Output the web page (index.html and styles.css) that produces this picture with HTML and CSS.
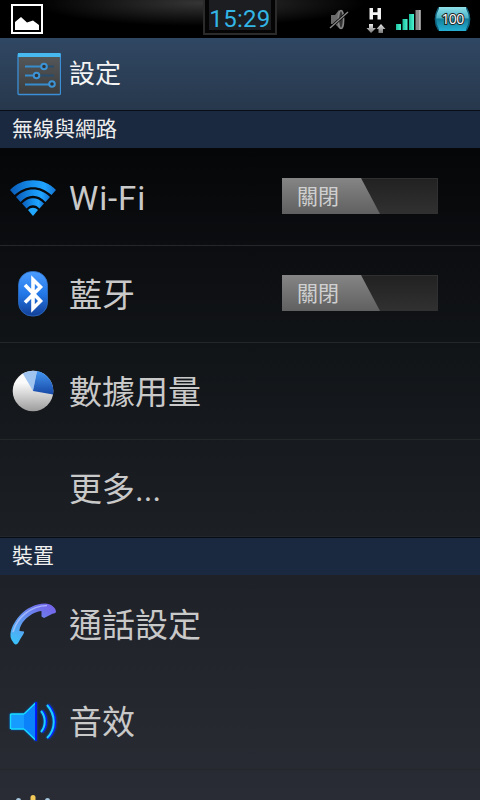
FILE: index.html
```html
<!DOCTYPE html>
<html lang="zh-Hant">
<head>
    <meta charset="UTF-8">
    <meta name="viewport" content="width=device-width, initial-scale=1.0">
    <title>設定</title>
    <link rel="stylesheet" href="styles.css">
</head>
<body>
    <div class="status-bar">
        <svg class="status-picture" width="32" height="30" viewBox="0 0 32 30">
            <rect x="1" y="1" width="30" height="28" fill="#000" stroke="#fff" stroke-width="2"/>
            <path d="M4 26V18L10 13L16 18.500L22 16.500L28 21V26Z" fill="#fff"/>
        </svg>
        <div class="clock"><span>15:29</span></div>
        <div class="status-icons">
            <svg width="152" height="38" viewBox="328 0 152 38">
                <defs>
                    <linearGradient id="bars" x1="0" y1="0" x2="1" y2="0">
                        <stop offset="0" stop-color="#1cbf9c"/>
                        <stop offset="1" stop-color="#4cf5d2"/>
                    </linearGradient>
                    <linearGradient id="battery" x1="0" y1="0" x2="0" y2="1">
                        <stop offset="0" stop-color="#8fe0ea"/>
                        <stop offset=".45" stop-color="#4bb4c6"/>
                        <stop offset=".5" stop-color="#147f9b"/>
                        <stop offset="1" stop-color="#26b0d3"/>
                    </linearGradient>
                    <linearGradient id="arrows" x1="0" y1="0" x2="0" y2="1">
                        <stop offset="0" stop-color="#e8e8e8"/>
                        <stop offset="1" stop-color="#777"/>
                    </linearGradient>
                </defs>
                <!-- muted speaker -->
                <path d="M331 15H335L339 10V28L335 24H331Z" fill="#6a6a6a"/>
                <ellipse cx="341" cy="19.5" rx="2.6" ry="9" fill="#333" stroke="#858585" stroke-width="1.6"/>
                <path d="M330 28L348 12" stroke="#000" stroke-width="3"/>
                <path d="M330 28L348 12" stroke="#8a8a8a" stroke-width="1.4"/>
                <!-- mobile data -->
                <path d="M369.500 8H373V12.300H377.500V8H381V19.500H377.500V15H373V19.500H369.500Z" fill="#f2f2f2"/>
                <path d="M369 24H373V28H376L371 33L366.500 28H369Z" fill="url(#arrows)"/>
                <path d="M378.500 33H383V29H385.500L381 24L376.500 29H378.500Z" fill="url(#arrows)"/>
                <!-- signal -->
                <rect x="396" y="24" width="5" height="6" fill="url(#bars)"/>
                <rect x="402.500" y="19" width="5" height="11" fill="url(#bars)"/>
                <rect x="409" y="14" width="5" height="16" fill="url(#bars)"/>
                <rect x="415.500" y="10" width="5" height="20" fill="#8b8b8b"/>
                <path d="M420 10V30" stroke="#d6d6d6"/>
                <!-- battery -->
                <path d="M439 7H466C471 14 471 24 466 31H439C434 24 434 14 439 7Z" fill="url(#battery)"/>
                <path d="M438.500 8C434.500 15 434.500 23 438.500 30M466.500 8C470.500 15 470.500 23 466.500 30" fill="none" stroke="#0d5e7a" stroke-width="1.5"/>
                <text class="battery-text" x="452.500" y="24" text-anchor="middle">100</text>
            </svg>
        </div>
    </div>

    <div class="action-bar">
        <svg width="44" height="43" viewBox="0 0 44 43">
            <defs>
                <linearGradient id="panel" x1="0" y1="0" x2="0" y2="1">
                    <stop offset="0" stop-color="#56585a"/>
                    <stop offset="1" stop-color="#3a3c3d"/>
                </linearGradient>
            </defs>
            <rect x="1" y="1" width="42.500" height="40.500" rx="1" fill="url(#panel)" stroke="#3a8fd6" stroke-width="1.300"/>
            <path d="M1 0H43.500V4H1Z" fill="#48b9ef"/>
            <path d="M8 13.500H24M8 22.500H16M8 31.500H32" stroke="#378ccd" stroke-width="1.900"/>
            <path d="M30 13.500H37M22 22.500H37" stroke="#294d6c" stroke-width="1.900"/>
            <g fill="#303234" stroke="#3c93d5" stroke-width="2">
                <circle cx="27" cy="13.500" r="2.800"/>
                <circle cx="19.500" cy="22.500" r="2.800"/>
                <circle cx="35" cy="31" r="2.800"/>
            </g>
        </svg>
        <h1>設定</h1>
    </div>

    <div class="section-title">無線與網路</div>
    <ul class="list">
        <li>
            <div class="icon">
                <svg width="48" height="48" viewBox="0 0 48 48">
                    <defs>
                        <linearGradient id="wifi" x1="0" y1="0" x2="1" y2="0">
                            <stop offset="0" stop-color="#0b5bb8"/>
                            <stop offset=".5" stop-color="#1692f0"/>
                            <stop offset=".75" stop-color="#20a4ff"/>
                            <stop offset="1" stop-color="#1472cf"/>
                        </linearGradient>
                    </defs>
                    <g fill="url(#wifi)">
                        <path d="M1 17C13 4 35 4 47 17L42.500 22C31 11.500 17 11.500 5.500 22Z"/>
                        <path d="M7 24C17 14 31 14 41 24L36.500 29C29 20.500 19 20.500 11.500 29Z"/>
                        <path d="M13 30.500C20 23.500 28 23.500 35 30.500L30.500 35.500C27 31 21 31 17.500 35.500Z"/>
                        <path d="M19 37C22 34 26 34 29 37L24 43Z" fill="#22a8ff"/>
                    </g>
                </svg>
            </div>
            <span class="label latin">Wi-Fi</span>
            <div class="switch"><span>關閉</span></div>
        </li>
        <li>
            <div class="icon">
                <svg width="48" height="48" viewBox="0 0 48 48">
                    <defs>
                        <linearGradient id="bt" x1="0" y1="0" x2="0" y2="1">
                            <stop offset="0" stop-color="#4c9cff"/>
                            <stop offset=".5" stop-color="#2378e8"/>
                            <stop offset="1" stop-color="#123f97"/>
                        </linearGradient>
                    </defs>
                    <rect x="9.500" y="1.500" width="29" height="44.500" rx="13.500" fill="url(#bt)" stroke="#2e6ec4" stroke-width=".8"/>
                    <path d="M16 15L31.500 31L24 38.500V9.500L31.500 17L16 32.500" fill="none" stroke="#fff" stroke-width="3.600"/>
                </svg>
            </div>
            <span class="label">藍牙</span>
            <div class="switch"><span>關閉</span></div>
        </li>
        <li>
            <div class="icon">
                <svg width="48" height="48" viewBox="0 0 48 48">
                    <defs>
                        <linearGradient id="pie" x1="0" y1="0" x2="0" y2="1">
                            <stop offset=".3" stop-color="#fafafa"/>
                            <stop offset="1" stop-color="#9c9c9c"/>
                        </linearGradient>
                        <linearGradient id="slice" x1="0" y1="0" x2="0" y2="1">
                            <stop offset="0" stop-color="#4296f0"/>
                            <stop offset="1" stop-color="#1748a6"/>
                        </linearGradient>
                    </defs>
                    <circle cx="24" cy="24" r="20.300" fill="url(#pie)"/>
                    <path d="M24 24L13.800 6.500A20.300 20.300 0 0 1 28 4.100Z" fill="#9fc4ef"/>
                    <path d="M24 24L28 4.100A20.300 20.300 0 0 1 44.100 27.500Z" fill="url(#slice)"/>
                </svg>
            </div>
            <span class="label">數據用量</span>
        </li>
        <li>
            <div class="icon"></div>
            <span class="label">更多...</span>
        </li>
    </ul>

    <div class="section-title">裝置</div>
    <ul class="list">
        <li class="plain">
            <div class="icon">
                <svg width="48" height="48" viewBox="0 0 48 48">
                    <defs>
                        <linearGradient id="phone" x1="0" y1="1" x2=".7" y2="0">
                            <stop offset="0" stop-color="#35c8fb"/>
                            <stop offset=".45" stop-color="#5f9cf0"/>
                            <stop offset="1" stop-color="#7468ea"/>
                        </linearGradient>
                    </defs>
                    <path d="M1.500 36C1 24 16 3.500 36 3.500C42 3.500 47 8 47 11.500C47 13 45.500 13.500 44 13.500L35 18L32.500 16.500V11C22 12 11 22 10.500 31L15 31.500C15.500 34 12 37 10 41.500C8 45.500 5.500 45 4 42C2.500 40 1.500 38 1.500 36Z" fill="url(#phone)"/>
                    <path d="M4 32C8 17 22 6 38 5.500" fill="none" stroke="#b4c6ff" stroke-width="1.500" opacity=".75"/>
                </svg>
            </div>
            <span class="label">通話設定</span>
        </li>
        <li>
            <div class="icon">
                <svg class="glow" width="48" height="48" viewBox="0 0 48 48">
                    <path d="M1 17H15L27 5.500V43.500L15 32H1Z" fill="#0b82fa"/>
                    <path d="M2 17H15V32H2Z" fill="#169cff"/>
                    <path d="M15 17L27 5.500M15 32L27 43.500M2 32H15M1.500 17V32M1.500 17H15" fill="none" stroke="#16dcff" stroke-width="1.400"/>
                    <path d="M27 5V44" stroke="#0015ff" stroke-width="1.800"/>
                    <path d="M33 14C38 20 38 29 33 35M39 8C48 18 48 32 39 41" fill="none" stroke="#0720ff" stroke-width="3"/>
                    <path d="M32 14C37 20 37 29 32 35M38 8C47 18 47 32 38 41" fill="none" stroke="#1cceff" stroke-width="2"/>
                </svg>
            </div>
            <span class="label">音效</span>
        </li>
        <li class="partial">
            <div class="icon">
                <svg width="48" height="6" viewBox="0 0 48 6">
                    <path d="M24 3.500V12" stroke="#f3ca57" stroke-width="5" stroke-linecap="round"/>
                    <circle cx="9.500" cy="6.500" r="2.500" fill="#a8c8df"/>
                    <circle cx="38.500" cy="6.500" r="2.500" fill="#a8c8df"/>
                </svg>
            </div>
        </li>
    </ul>
</body>
</html>
```
FILE: styles.css
```css
* {
    box-sizing: border-box;
}

body {
    margin: 0;
    height: 800px;
    overflow: hidden;
    font-family: Roboto, 'Noto Sans CJK TC', sans-serif;
    color: #c9c9c9;
    background: linear-gradient(#050608 148px, #111417 343px, #1c1f24 537px, #292c34 800px);
}

.status-bar {
    position: relative;
    height: 38px;
    display: flex;
    justify-content: space-between;
    background: radial-gradient(ellipse 165px 23px at 200px 3px, #353535, #000);
}

.status-picture {
    margin: 4px 0 0 11px;
}

.status-icons {
    height: 38px;
}

/* the clock sits centred over the bar */
.clock {
    position: absolute;
    left: 203px;
    top: 0;
    width: 74px;
    height: 35px;
    padding: 0 4px 4px;
    border: 2px solid #2b2b2b;
    border-top: 0;
    background: #050505;
    font-size: 24px;
    line-height: 38px;
    color: #33b5e5;
}

.clock span {
    display: flex;
    justify-content: center;
    height: 30px;
    background: #1b1d20;
    letter-spacing: 0.3px;
    white-space: nowrap;
}

.battery-text {
    font-family: 'Open Sans', sans-serif;
    font-size: 14px;
    letter-spacing: -0.6px;
    fill: #fff;
    stroke: #222;
    stroke-width: 2px;
    paint-order: stroke;
}

.action-bar {
    height: 72px;
    padding-left: 17px;
    display: flex;
    align-items: center;
    gap: 8px;
    background: linear-gradient(#304763, #27384c);
}

.action-bar h1 {
    margin: 0;
    font-size: 26px;
    font-weight: 400;
    line-height: 36px;
    color: #f3f3f3;
}

.section-title {
    height: 39px;
    padding-left: 12px;
    border-top: 1px solid #080e16;
    border-bottom: 1px solid transparent;
    background: #1a2940;
    background-clip: padding-box;
    font-size: 21px;
    line-height: 37px;
    color: #eee;
}

.list {
    margin: 0;
    padding: 0;
    list-style: none;
}

.list li {
    height: 97px;
    padding: 0 42px 0 9px;
    display: flex;
    align-items: center;
    border-bottom: 1px solid #24272a;
}

.list .plain {
    border-bottom-color: transparent;
}

.icon {
    width: 48px;
    height: 48px;
    margin-right: 12px;
}

.icon svg {
    display: block;
}

.glow {
    filter: drop-shadow(0 0 1px #0755c8);
}

.label {
    flex: 1;
    padding-top: 4px;
    font-size: 33px;
    line-height: 48px;
}

.latin {
    letter-spacing: 0.9px;
}

.switch {
    width: 156px;
    height: 36px;
    margin-bottom: 2px;
    border: 1px solid #303030;
    border-left: 0;
    background: linear-gradient(#222, #303030);
}

.switch span {
    display: block;
    width: 98px;
    height: 36px;
    margin-top: -1px;
    padding-left: 15px;
    background: linear-gradient(#858585, #606060);
    clip-path: polygon(0 0, 79px 0, 98px 100%, 0 100%);
    font-size: 21px;
    line-height: 39px;
    color: #d0d0d0;
}

/* last row, only its top shows on the screen */
.list .partial {
    height: 30px;
    align-items: flex-end;
    border-bottom: 0;
}

.partial .icon {
    height: 6px;
}
```
